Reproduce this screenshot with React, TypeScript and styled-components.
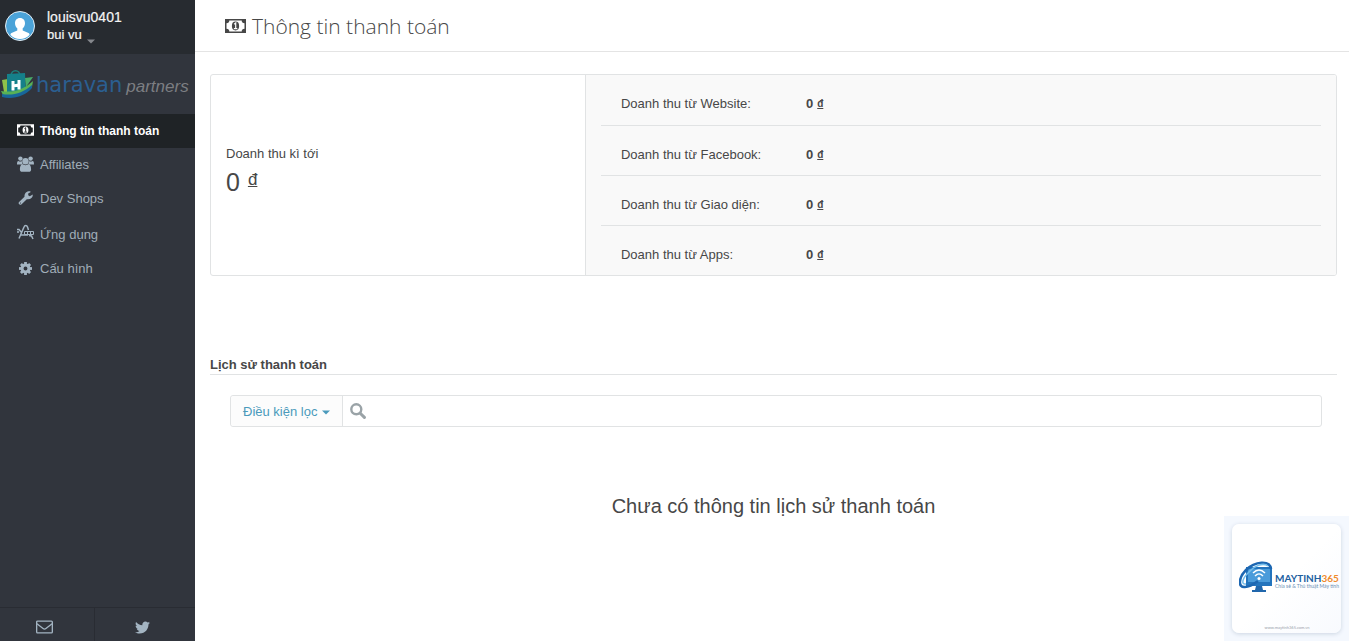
import React from "react";
import styled, { createGlobalStyle } from "styled-components";
import { FaTwitter } from "react-icons/fa";

const GlobalStyle = createGlobalStyle`
  *, *::before, *::after { box-sizing: border-box; }
  html, body { margin: 0; padding: 0; }
  body {
    font-family: "Liberation Sans", Arial, sans-serif;
    font-size: 13px;
    line-height: 18px;
    color: #474747;
    background: #fff;
  }
  h1, h2, p, dl, dd, dt, ul { margin: 0; padding: 0; }
  button, input { font: inherit; }
  svg { flex: none; }
`;

const Page = styled.div`
  display: flex;
  min-height: 100vh;
`;

const Sidebar = styled.aside`
  display: flex;
  flex-direction: column;
  flex: 0 0 195px;
  background: #31353d;
`;

const Account = styled.button`
  display: flex;
  align-items: center;
  gap: 12px;
  height: 54px;
  padding: 0 5px 2px;
  border: 0;
  background: #272b30;
  color: #f4f4f4;
  text-align: left;
  cursor: pointer;
`;

const AccountText = styled.span`
  display: flex;
  flex-direction: column;
`;

const AccountLine = styled.span<{ $small?: boolean }>`
  display: flex;
  align-items: flex-end;
  gap: 5px;
  font-size: ${(p) => (p.$small ? 13 : 14)}px;
  line-height: 18px;
  -webkit-text-stroke: 0.2px currentColor;

  svg { color: #85888d; }
`;

const Brand = styled.a`
  display: flex;
  align-items: center;
  height: 60px;
  padding: 2px 0 0 1px;
  gap: 2px;
  text-decoration: none;
`;

const BrandName = styled.span`
  font-family: "DejaVu Sans", sans-serif;
  font-size: 21px;
  line-height: 24px;
  color: #2b5f91;
`;

const BrandSuffix = styled.span`
  padding: 4px 0 0 2px;
  font-size: 17px;
  line-height: 20px;
  font-style: italic;
  color: #7c7e82;
`;

const Menu = styled.ul`
  flex: 1;
  list-style: none;
`;

const MenuLink = styled.a<{ $active?: boolean; $tall?: boolean }>`
  display: flex;
  align-items: center;
  gap: 6px;
  height: ${(p) => (p.$tall ? 36 : 34)}px;
  padding: ${(p) => (p.$tall ? 2 : 0)}px 0 0 17px;
  color: ${(p) => (p.$active ? "#fff" : "#a0adb8")};
  background: ${(p) => (p.$active ? "#1f2326" : "transparent")};
  font-size: ${(p) => (p.$active ? 12 : 13)}px;
  font-weight: ${(p) => (p.$active ? 700 : 400)};
  text-decoration: none;
`;

const MenuIcon = styled.span<{ $active?: boolean; $tall?: boolean }>`
  display: flex;
  justify-content: center;
  width: 17px;
  padding-bottom: ${(p) => (p.$tall ? 6 : 2)}px;
  color: ${(p) => (p.$active ? "#fff" : "#a3b4c2")};
`;

const SideFooter = styled.div`
  display: flex;
  height: 34px;
  border-top: 1px solid #292c33;
`;

const FooterLink = styled.a`
  display: flex;
  flex: 1;
  align-items: center;
  justify-content: center;
  padding-top: 5px;
  color: #a3b4c2;

  &:first-child {
    flex: 0 0 95px;
    padding-right: 6px;
    border-right: 1px solid #292c33;
  }
  &:last-child { padding-right: 5px; }
`;

const Main = styled.main`
  flex: 1;
  min-width: 0;
`;

const TitleBar = styled.header`
  display: flex;
  align-items: center;
  gap: 6px;
  height: 52px;
  padding-left: 30px;
  border-bottom: 1px solid #e4e4e4;
`;

const Title = styled.h1`
  font-family: "Open Sans", sans-serif;
  font-size: 21px;
  line-height: 30px;
  font-weight: 300;
  color: #474747;
`;

const Content = styled.div`
  padding: 22px 12px 0 15px;
`;

const Summary = styled.section`
  display: grid;
  grid-template-columns: calc(100% / 3 - 1px) 1fr;
  border: 1px solid #e1e3e4;
  border-radius: 3px;
  overflow: hidden;
`;

const Upcoming = styled.div`
  display: flex;
  flex-direction: column;
  justify-content: center;
  gap: 5px;
  padding: 0 15px 9px;
`;

const Total = styled.p`
  display: flex;
  gap: 8px;
  font-size: 25px;
  line-height: 28px;
`;

const Currency = styled.span`
  font-size: 17px;
  line-height: 24px;
  text-decoration: underline;
`;

const Breakdown = styled.dl`
  padding: 0 15px;
  border-left: 1px solid #e1e3e4;
  background: #f9f9f9;
`;

const BreakdownRow = styled.div`
  display: flex;
  height: 50px;
  padding: 20px 20px 0;
  border-bottom: 1px solid #e1e3e4;

  &:first-child { height: 51px; }
  &:last-child {
    height: 49px;
    border-bottom: 0;
  }
`;

const BreakdownLabel = styled.dt`
  width: 185px;
`;

const BreakdownValue = styled.dd`
  display: flex;
  gap: 4px;
  font-weight: 700;
`;

const SmallCurrency = styled.span`
  font-size: 10px;
  line-height: 18px;
  text-decoration: underline;
`;

const History = styled.section`
  padding-top: 80px;
`;

const HistoryTitle = styled.h2`
  border-bottom: 1px solid #e1e3e4;
  font-size: 13px;
  line-height: 18px;
`;

const Filter = styled.form`
  display: flex;
  height: 32px;
  margin: 20px 15px 0 20px;
  border: 1px solid #e1e3e4;
  border-radius: 3px;
`;

const FilterButton = styled.button`
  display: flex;
  align-items: center;
  gap: 5px;
  padding: 2px 12px 0;
  border: 0;
  border-right: 1px solid #e1e3e4;
  border-radius: 3px 0 0 3px;
  background: #fcfcfc;
  color: #4a9abb;
  cursor: pointer;
`;

const SearchField = styled.label`
  display: flex;
  flex: 1;
  align-items: center;
  gap: 8px;
  padding-left: 7px;
  color: #9aa3a7;
`;

const SearchInput = styled.input`
  flex: 1;
  border: 0;
  outline: 0;
  background: transparent;
  color: #474747;
`;

const Empty = styled.p`
  padding: 67px 0 32px;
  font-size: 20px;
  line-height: 24px;
  text-align: center;
`;

const Watermark = styled.div`
  position: fixed;
  right: 0;
  bottom: 0;
  padding: 8px;
  background: #f4f8fe;
`;

const WatermarkCard = styled.a`
  display: flex;
  flex-direction: column;
  width: 109px;
  height: 109px;
  padding: 0 6px 2px 7px;
  border-radius: 7px;
  background: linear-gradient(135deg, #fff 50%, #f8fafe);
  box-shadow: 0 1px 4px #ccd5e2;
  text-decoration: none;
`;

const WatermarkLogo = styled.span`
  display: flex;
  flex: 1;
  align-items: center;
  gap: 2px;
  padding-top: 7px;
`;

const WatermarkName = styled.span`
  display: flex;
  flex-direction: column;
  padding-top: 6px;
  white-space: nowrap;
`;

const WatermarkWord = styled.span`
  font-family: Lato, sans-serif;
  font-size: 10px;
  line-height: 10px;
  font-weight: 700;
  color: #21609f;
`;

const WatermarkNumber = styled.span`
  color: #f08a2c;
`;

const WatermarkNote = styled.span<{ $center?: boolean }>`
  font-family: Lato, sans-serif;
  font-size: ${(p) => (p.$center ? 4 : 5)}px;
  line-height: 6px;
  color: ${(p) => (p.$center ? "#9aa2ab" : "#6b8fb5")};
  text-align: ${(p) => (p.$center ? "center" : "left")};
`;

const Banknote = ({ width, height, paper }: { width: number; height: number; paper: string }) => (
  <svg width={width} height={height} viewBox="0 0 21 14" fill="none" aria-hidden="true">
    <path
      fill="currentColor"
      fillRule="evenodd"
      d="M0 0h21v14H0zM4.300 1.500a2.800 2.800 0 0 1-2.800 2.800v5.400a2.800 2.800 0 0 1 2.800 2.800h12.400a2.800 2.800 0 0 1 2.800-2.800V4.300a2.800 2.800 0 0 1-2.800-2.800z"
    />
    <ellipse cx="10.500" cy="7" rx="3.600" ry="4.400" fill="currentColor" />
    <path d="M9.200 5.300 10.700 4.100V9.200M8.900 9.600h3.400" stroke={paper} strokeWidth="1.200" />
  </svg>
);

const Caret = () => (
  <svg width="8" height="5" viewBox="0 0 8 5" aria-hidden="true">
    <path d="M0 .5h8L4 4.500z" fill="currentColor" />
  </svg>
);

const Avatar = () => (
  <svg width="30" height="30" viewBox="0 0 30 30" aria-hidden="true">
    <circle cx="15" cy="15" r="14.500" fill="#4ba3d8" stroke="#e3edf3" />
    <path
      d="M15 7c-3.300 0-5 2.300-5 5.200 0 2.200 1 4 2.300 5.100v2.200L6.500 22c-.9.500-1.100 1.300-1 2a13.500 13.500 0 0 0 19 0c.1-.7-.1-1.500-1-2l-5.800-2.500v-2.200C19 16.200 20 14.400 20 12.200 20 9.300 18.300 7 15 7z"
      fill="#fff"
    />
  </svg>
);

const BagLogo = () => (
  <svg width="33" height="32" viewBox="0 0 33 32" aria-hidden="true">
    <path d="M1 11l6-1v14l-4-1z" fill="#8fc24a" />
    <path d="M10 7c0-7 9-7 9 0" fill="none" stroke="#1c7f7c" strokeWidth="1.500" />
    <path d="M6 5l18-1 1 20H6z" fill="#15808a" />
    <path d="M24 9l8-1-7 10z" fill="#49ad6b" />
    <path d="M0 22c12 2 22-1 32-10l-1 6C24 25 12 29 2 26z" fill="#58b156" />
    <path d="M1 25c11 2 21-1 30-9v3C24 27 12 31 1 28z" fill="#17669a" />
    <path d="M12 12v9.500M18 11v9.500M12 17l6-1" stroke="#fff" strokeWidth="3" fill="none" />
  </svg>
);

const UsersIcon = () => (
  <svg width="17" height="16" viewBox="0 0 17 16" fill="currentColor" aria-hidden="true">
    <circle cx="3.400" cy="2.600" r="2.200" />
    <circle cx="13.600" cy="2.600" r="2.200" />
    <path d="M0 8.500C0 6.500.3 5 1.400 5c1.300.8 2.500.8 3.600.1C4.800 6.500 5.200 7.500 6 8.500zM17 8.500c0-2-.3-3.500-1.400-3.500-1.300.8-2.500.8-3.600.1.2 1.400-.2 2.400-1 3.400z" />
    <circle cx="8.500" cy="5.300" r="3.200" />
    <path d="M5.600 8.300c1.700 1.100 4.100 1.100 5.800 0 2 0 2.700 2.700 2.700 5.200 0 1.600-.9 2.300-2.200 2.300H5.100c-1.300 0-2.200-.7-2.200-2.300 0-2.500.7-5.200 2.700-5.200z" />
  </svg>
);

const WrenchIcon = () => (
  <svg width="15" height="14" viewBox="0 0 15 14" aria-hidden="true">
    <path
      fill="currentColor"
      fillRule="evenodd"
      d="M8.800 8.200 3.600 13.300c-1.700 1.500-4-.7-2.500-2.400l5.400-5.200C6.200 2.300 9 0 12.300.4l.5.500-2.600 1.700v1.600l1.600 1L14.700 3.500c.6 2.700-2.200 5.500-5.900 4.700zM2.400 11.400a.6.600 0 1 0 .1 1.200.6.600 0 0 0-.1-1.200z"
    />
  </svg>
);

const AppsIcon = () => (
  <svg width="17" height="16" viewBox="0 0 17 16" fill="none" stroke="currentColor" aria-hidden="true">
    <path d="M0 5.500h2l2.500 3M2 14.500 7 3c.7-2 2.800-2 3.500 0l1 3M1 7v2M3.500 11H11M12 11.500l2.500.5 1.500 3" strokeWidth="1.500" />
    <path d="M7.500 7.500h9v3h-9zM10.500 7.500v3M13.500 7.500v3" />
  </svg>
);

const CogIcon = () => (
  <svg width="13" height="13" viewBox="0 0 14 14" aria-hidden="true">
    <g fill="currentColor">
      {[0, 45, 90, 135, 180, 225, 270, 315].map((angle) => (
        <rect key={angle} x="5.500" width="3" height="4" transform={`rotate(${angle} 7 7)`} />
      ))}
    </g>
    <circle cx="7" cy="7" r="3.700" fill="none" stroke="currentColor" strokeWidth="3.200" />
  </svg>
);

const EnvelopeIcon = () => (
  <svg width="17" height="14" viewBox="0 0 18 14" fill="none" stroke="currentColor" strokeWidth="1.400" aria-hidden="true">
    <rect x=".7" y=".7" width="16.600" height="12.600" rx="1" />
    <path d="M1 3.500 7.500 8.600c1 .8 2 .8 3 0L17 3.500" />
  </svg>
);

const SearchIcon = () => (
  <svg width="16" height="16" viewBox="0 0 16 16" fill="none" stroke="currentColor" aria-hidden="true">
    <circle cx="6.300" cy="6.300" r="5" strokeWidth="2.400" />
    <path d="M10.200 10.200l4.200 4.200" strokeWidth="3" strokeLinecap="round" />
  </svg>
);

const ComputerLogo = () => (
  <svg width="34" height="34" viewBox="0 0 34 34" aria-hidden="true">
    <path d="M7 6h26v19H7z" fill="#2374bd" />
    <path d="M9 8h22v13H9z" fill="#4a9bda" />
    <path d="M17 25h6l1 4h3v2H13v-2h3z" fill="#2167ac" />
    <path d="M32 8C31-1 16 0 7 9-1 17-1 27 6 26c5 0 9-3 13-6" fill="none" stroke="#1d67b2" strokeWidth="2.600" />
    <path d="M29 5c-5-4-14 0-20 7-6 6-7 12-2 11" fill="none" stroke="#73bdeb" strokeWidth="1.500" />
    <path d="M14 12c4-4 8-4 12 0M16 15c3-3 5-3 8 0" fill="none" stroke="#fff" strokeWidth="1.500" />
    <circle cx="20" cy="17.500" r="1.500" fill="#fff" />
  </svg>
);

const menu = [
  { label: "Affiliates", icon: <UsersIcon /> },
  { label: "Dev Shops", icon: <WrenchIcon /> },
  { label: "Ứng dụng", icon: <AppsIcon />, tall: true },
  { label: "Cấu hình", icon: <CogIcon /> },
];

const revenue = ["Website", "Facebook", "Giao diện", "Apps"];

export default function App() {
  return (
    <Page>
      <GlobalStyle />
      <Sidebar>
        <Account type="button">
          <Avatar />
          <AccountText>
            <AccountLine>louisvu0401</AccountLine>
            <AccountLine $small>
              bui vu <Caret />
            </AccountLine>
          </AccountText>
        </Account>
        <Brand href="#">
          <BagLogo />
          <BrandName>haravan</BrandName>
          <BrandSuffix>partners</BrandSuffix>
        </Brand>
        <Menu>
          <li>
            <MenuLink href="#" $active aria-current="page">
              <MenuIcon $active>
                <Banknote width={17} height={12} paper="#1f2326" />
              </MenuIcon>
              Thông tin thanh toán
            </MenuLink>
          </li>
          {menu.map((item) => (
            <li key={item.label}>
              <MenuLink href="#" $tall={item.tall}>
                <MenuIcon $tall={item.tall}>{item.icon}</MenuIcon>
                {item.label}
              </MenuLink>
            </li>
          ))}
        </Menu>
        <SideFooter>
          <FooterLink href="#" aria-label="Email">
            <EnvelopeIcon />
          </FooterLink>
          <FooterLink href="#" aria-label="Twitter">
            <FaTwitter size={15} />
          </FooterLink>
        </SideFooter>
      </Sidebar>
      <Main>
        <TitleBar>
          <Banknote width={21} height={14} paper="#fff" />
          <Title>Thông tin thanh toán</Title>
        </TitleBar>
        <Content>
          <Summary>
            <Upcoming>
              <p>Doanh thu kì tới</p>
              <Total>
                0 <Currency>đ</Currency>
              </Total>
            </Upcoming>
            <Breakdown>
              {revenue.map((name) => (
                <BreakdownRow key={name}>
                  <BreakdownLabel>Doanh thu từ {name}:</BreakdownLabel>
                  <BreakdownValue>
                    0 <SmallCurrency>đ</SmallCurrency>
                  </BreakdownValue>
                </BreakdownRow>
              ))}
            </Breakdown>
          </Summary>
          <History>
            <HistoryTitle>Lịch sử thanh toán</HistoryTitle>
            <Filter onSubmit={(e) => e.preventDefault()}>
              <FilterButton type="button">
                Điều kiện lọc <Caret />
              </FilterButton>
              <SearchField>
                <SearchIcon />
                <SearchInput type="text" aria-label="Tìm kiếm" />
              </SearchField>
            </Filter>
            <Empty>Chưa có thông tin lịch sử thanh toán</Empty>
          </History>
        </Content>
      </Main>
      <Watermark>
        <WatermarkCard href="#">
          <WatermarkLogo>
            <ComputerLogo />
            <WatermarkName>
              <WatermarkWord>
                MAYTINH<WatermarkNumber>365</WatermarkNumber>
              </WatermarkWord>
              <WatermarkNote>Chia sẻ &amp; Thủ thuật Máy tính</WatermarkNote>
            </WatermarkName>
          </WatermarkLogo>
          <WatermarkNote $center>www.maytinh365.com.vn</WatermarkNote>
        </WatermarkCard>
      </Watermark>
    </Page>
  );
}
